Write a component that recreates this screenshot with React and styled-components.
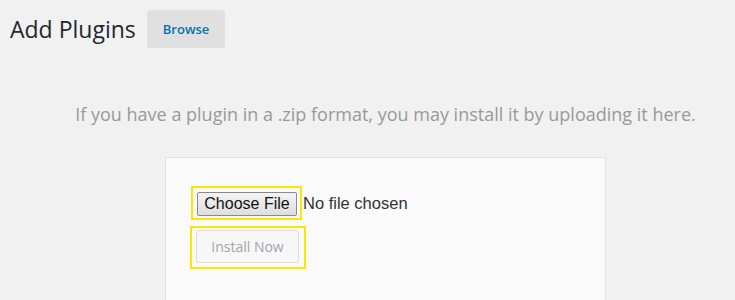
import styled, { createGlobalStyle } from "styled-components";

const GlobalStyle = createGlobalStyle`
    html, body {
        margin: 0;
        background: #f1f1f1;
        font-family: "Open Sans", "Liberation Sans", sans-serif;
    }
`;

const Page = styled.div`
    width: 735px;
    height: 300px;
    overflow: hidden;
`;

const Header = styled.div`
    display: flex;
    align-items: center;
    gap: 11px;
    padding: 10px 0 0 10px;
`;

const Title = styled.h1`
    margin: 0;
    font-size: 23px;
    font-weight: 400;
    color: #23282d;
    line-height: 38px;
`;

const TabButton = styled.button`
    height: 38px;
    padding: 0 16px;
    border: none;
    border-radius: 3px;
    background: #e0e0e0;
    color: #0073aa;
    font-family: "Open Sans", sans-serif;
    font-size: 13px;
    font-weight: 600;
`;

const Upload = styled.section`
    padding-left: 36px;
    display: flex;
    flex-direction: column;
    align-items: center;
`;

const Help = styled.p`
    margin: 54px 0 0;
    font-size: 18px;
    line-height: 24px;
    color: #999;
    white-space: nowrap;
`;

const Card = styled.div`
    margin-top: 31px;
    width: 389px;
    padding: 28px 25px 40px;
    border: 1px solid #e2e2e2;
    background: #fafafa;
    display: flex;
    flex-direction: column;
    align-items: flex-start;
    gap: 6px;
`;

const Highlight = styled.div`
    border: 2px solid #ffe500;
    padding: ${p => p.$pad};
    margin-left: ${p => p.$shift || 0}px;
    display: flex;
`;

const FileRow = styled.div`
    display: flex;
    align-items: center;
`;

const ChooseButton = styled.div`
    box-sizing: border-box;
    width: 100px;
    height: 24px;
    border: 1px solid #8a8a8a;
    border-radius: 2px;
    background: linear-gradient(#f4f4f4, #dedede);
    font-family: "Liberation Sans", Arial, sans-serif;
    font-size: 16px;
    color: #111;
    display: flex;
    align-items: center;
    justify-content: center;
`;

const FileStatus = styled.span`
    margin-left: 1px;
    font-family: "Liberation Sans", Arial, sans-serif;
    font-size: 16.5px;
    color: #333;
`;

const InstallButton = styled.button`
    box-sizing: border-box;
    width: 103px;
    height: 33px;
    border: 1px solid #dddddd;
    border-radius: 3px;
    background: #f7f7f7;
    color: #a0a5aa;
    font-family: "Open Sans", sans-serif;
    font-size: 14px;
    padding: 0;
`;

export default function App() {
    return (
        <Page>
            <GlobalStyle />
            <Header>
                <Title>Add Plugins</Title>
                <TabButton>Browse</TabButton>
            </Header>
            <Upload>
                <Help>
                    If you have a plugin in a .zip format, you may install it by uploading it here.
                </Help>
                <Card>
                    <FileRow>
                        <Highlight $pad="4px 3px 2px 4px">
                            <ChooseButton>Choose File</ChooseButton>
                        </Highlight>
                        <FileStatus>No file chosen</FileStatus>
                    </FileRow>
                    <Highlight $pad="2px 5px 4px 4px" $shift={-1}>
                        <InstallButton disabled>Install Now</InstallButton>
                    </Highlight>
                </Card>
            </Upload>
        </Page>
    );
}
